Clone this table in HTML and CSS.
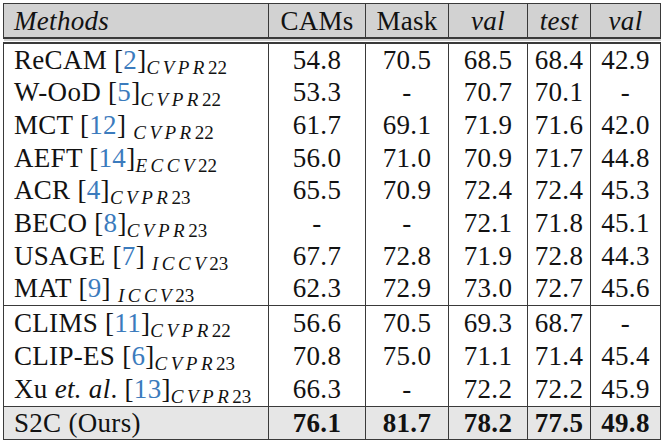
FILE: index.html
```html
<!DOCTYPE html>
<html lang="en">
<head>
    <meta charset="UTF-8">
    <meta name="viewport" content="width=device-width, initial-scale=1.0">
    <title>WSSS comparison table</title>
    <link rel="stylesheet" href="styles.css">
</head>
<body>
    <table class="results">
        <colgroup>
            <col class="c-method">
            <col class="c-cams">
            <col class="c-mask">
            <col class="c-val">
            <col class="c-test">
            <col class="c-coco">
        </colgroup>
        <thead>
            <tr>
                <th class="method"><i>Methods</i></th>
                <th>CAMs</th>
                <th>Mask</th>
                <th><i>val</i></th>
                <th><i>test</i></th>
                <th><i>val</i></th>
            </tr>
        </thead>
        <tbody>
            <tr>
                <td class="method">ReCAM [<span class="cite">2</span>]<sub><i>CVPR</i>22</sub></td>
                <td>54.8</td><td>70.5</td><td>68.5</td><td>68.4</td><td>42.9</td>
            </tr>
            <tr>
                <td class="method">W-OoD [<span class="cite">5</span>]<sub><i>CVPR</i>22</sub></td>
                <td>53.3</td><td>-</td><td>70.7</td><td>70.1</td><td>-</td>
            </tr>
            <tr>
                <td class="method">MCT [<span class="cite">12</span>] <sub><i>CVPR</i>22</sub></td>
                <td>61.7</td><td>69.1</td><td>71.9</td><td>71.6</td><td>42.0</td>
            </tr>
            <tr>
                <td class="method">AEFT [<span class="cite">14</span>]<sub><i>ECCV</i>22</sub></td>
                <td>56.0</td><td>71.0</td><td>70.9</td><td>71.7</td><td>44.8</td>
            </tr>
            <tr>
                <td class="method">ACR [<span class="cite">4</span>]<sub><i>CVPR</i>23</sub></td>
                <td>65.5</td><td>70.9</td><td>72.4</td><td>72.4</td><td>45.3</td>
            </tr>
            <tr>
                <td class="method">BECO [<span class="cite">8</span>]<sub><i>CVPR</i>23</sub></td>
                <td>-</td><td>-</td><td>72.1</td><td>71.8</td><td>45.1</td>
            </tr>
            <tr>
                <td class="method">USAGE [<span class="cite">7</span>] <sub><i>ICCV</i>23</sub></td>
                <td>67.7</td><td>72.8</td><td>71.9</td><td>72.8</td><td>44.3</td>
            </tr>
            <tr>
                <td class="method">MAT [<span class="cite">9</span>] <sub><i>ICCV</i>23</sub></td>
                <td>62.3</td><td>72.9</td><td>73.0</td><td>72.7</td><td>45.6</td>
            </tr>
            <tr class="group-start clip">
                <td class="method">CLIMS [<span class="cite">11</span>]<sub><i>CVPR</i>22</sub></td>
                <td>56.6</td><td>70.5</td><td>69.3</td><td>68.7</td><td>-</td>
            </tr>
            <tr class="clip">
                <td class="method">CLIP-ES [<span class="cite">6</span>]<sub><i>CVPR</i>23</sub></td>
                <td>70.8</td><td>75.0</td><td>71.1</td><td>71.4</td><td>45.4</td>
            </tr>
            <tr class="clip">
                <td class="method">Xu <em>et. al</em>. [<span class="cite">13</span>]<sub><i>CVPR</i>23</sub></td>
                <td>66.3</td><td>-</td><td>72.2</td><td>72.2</td><td>45.9</td>
            </tr>
            <tr class="group-start ours">
                <td class="method">S2C (Ours)</td>
                <td><b>76.1</b></td><td><b>81.7</b></td><td><b>78.2</b></td><td><b>77.5</b></td><td><b>49.8</b></td>
            </tr>
        </tbody>
    </table>
</body>
</html>
```

FILE: styles.css
```css
body, html {
    margin: 0;
    padding: 0;
    background-color: #fff;
    color: #121212;
    font-family: "Liberation Serif", "Times New Roman", serif;
}
body {
    padding: 3px 0 0 3px;
}
.results {
    border-collapse: collapse;
    table-layout: fixed;
    width: 658px;
    border: 1px solid #3a3a3a;
    font-size: 27px;
    letter-spacing: 0.3px;
}
.c-method { width: 265px; }
.c-cams { width: 97px; }
.c-mask { width: 83px; }
.c-val { width: 79px; }
.c-test { width: 63px; }
.c-coco { width: 70px; }

.results th,
.results td {
    padding: 0;
    height: 32.7px;
    line-height: 32px;
    text-align: center;
    white-space: nowrap;
    border-left: 1px solid #3a3a3a;
    font-weight: normal;
}
.results .method {
    text-align: left;
    padding-left: 10px;
}
.results thead th {
    background-color: #d2d2d2;
    height: 33px;
    border-bottom: 7px double #3a3a3a;
}
.results tbody tr:first-child td {
    height: 32px;
}
.results tr.group-start td {
    border-top: 1px solid #3a3a3a;
}
.results tr.clip td {
    height: 33.4px;
}
.results tr.ours td {
    background-color: #e6e6e6;
    height: 32px;
}
.cite {
    color: #3b7bbd;
}
sub {
    font-size: 19px;
    line-height: 0;
    vertical-align: -5px;
    letter-spacing: 0;
}
sub i {
    letter-spacing: 3.5px;
}
```
